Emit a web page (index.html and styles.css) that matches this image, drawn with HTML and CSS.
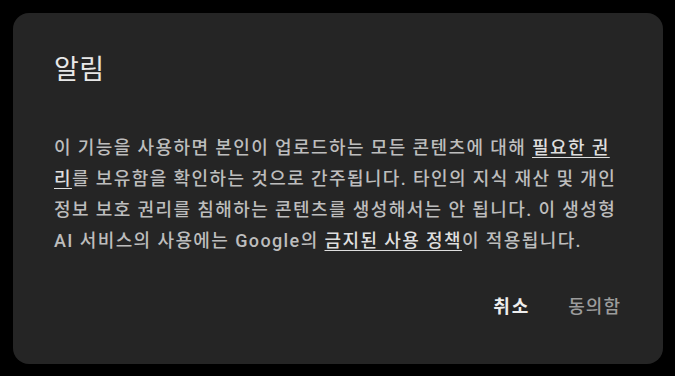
FILE: index.html
```html
<!DOCTYPE html>
<html lang="ko">
<head>
	<meta charset="UTF-8">
	<meta name="viewport" content="width=device-width, initial-scale=1">
	<title>알림</title>
	<link rel="stylesheet" href="styles.css">
</head>
<body>
	<div class="dialog" role="dialog" aria-labelledby="dialog_title">
		<h2 class="dialog__title" id="dialog_title">알림</h2>
		<p class="dialog__text">
			이 기능을 사용하면 본인이 업로드하는 모든 콘텐츠에 대해 <a class="dialog__link" href="#">필요한 권리</a>를 보유함을 확인하는 것으로 간주됩니다. 타인의 지식 재산 및 개인 정보 보호 권리를 침해하는 콘텐츠를 생성해서는 안 됩니다. 이 생성형 AI 서비스의 사용에는 Google의 <a class="dialog__link" href="#">금지된 사용 정책</a>이 적용됩니다.
		</p>
		<div class="dialog__actions">
			<button class="button button--primary" type="button">취소</button>
			<button class="button" type="button">동의함</button>
		</div>
	</div>
</body>
</html>
```

FILE: styles.css
```css
body {
	font-family: Roboto, "Noto Sans CJK KR", sans-serif;
	margin: 0px;
	background: #000;
}

.dialog {
	box-sizing: border-box;
	width: 650px;
	height: 351px;
	margin: 13px 0px 0px 13px;
	padding: 41px 42px 0px 41px;
	background: #252525;
	border-radius: 16px;
	display: flex;
	flex-direction: column;
}

.dialog__title {
	margin: 0px;
	font-size: 27px;
	font-weight: 400;
	line-height: 32px;
	letter-spacing: 0.5px;
	color: #e8e8e8;
}

.dialog__text {
	margin: 46px 0px 0px 0px;
	font-size: 18px;
	font-weight: 500;
	line-height: 31px;
	letter-spacing: 1.4px;
	color: #bdbdbd;
}

.dialog__link {
	color: #dedede;
	text-decoration: underline;
	text-underline-offset: 3px;
}

.dialog__actions {
	display: flex;
	justify-content: flex-end;
	gap: 38px;
	margin-top: 31px;
}

.button {
	padding: 0px;
	border: none;
	background: none;
	font-family: inherit;
	font-size: 18px;
	font-weight: 500;
	line-height: 40px;
	letter-spacing: 1px;
	color: #9c9c9c;
	cursor: pointer;
}
.button--primary {
	color: #ededed;
	font-weight: 700;
	letter-spacing: 2px;
}
```
